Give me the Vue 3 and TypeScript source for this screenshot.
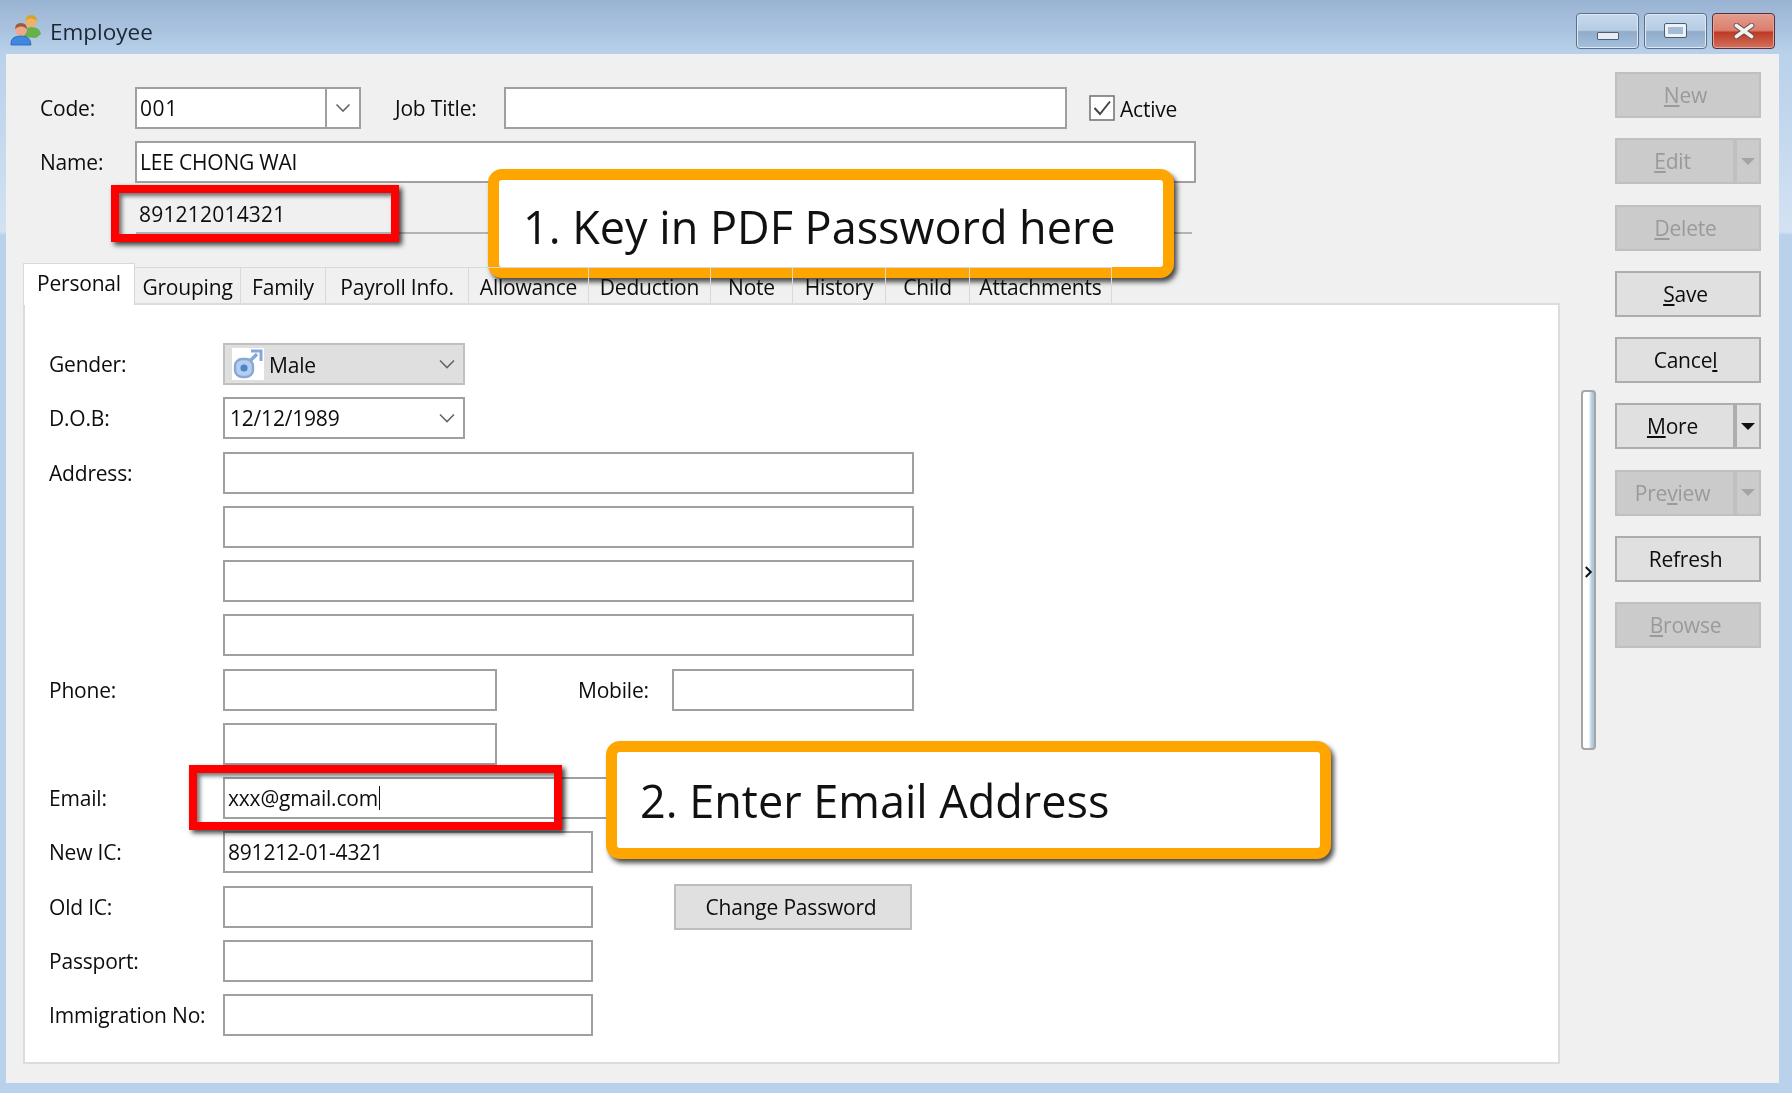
<template>
  <div class="window">
    <header class="titlebar">
      <svg class="app-icon" viewBox="0 0 32 32">
        <circle cx="21" cy="8" r="5.5" fill="#eeb16a" />
        <path d="M15 7 Q16 1 21 1 Q27 1 27 7 Q24 4 21 4.5 Q17 4 15 7Z" fill="#d9a520" />
        <path d="M14 23 Q14 13 21 13 Q30 13 31 20 L26 24Z" fill="#67b04c" />
        <circle cx="11" cy="16" r="6" fill="#eca88b" />
        <path d="M5 15 Q5 9 11 9 Q17 9 17 15 Q14 12 11 12.5 Q8 12 5 15Z" fill="#9c5a3c" />
        <path d="M1 31 Q0 22 11 22 Q21 22 21 31Z" fill="#3f88e0" stroke="#2a62b0" stroke-width="0.8" />
      </svg>
      <span class="title-text">Employee</span>
      <div class="win-controls">
        <button class="win-btn">
          <span class="glyph-min"></span>
        </button>
        <button class="win-btn">
          <span class="glyph-max"></span>
        </button>
        <button class="win-btn close">
          <svg viewBox="0 0 22 14" width="24" height="16">
            <path d="M4 2 L18 12 M18 2 L4 12" stroke="#5a4a50" stroke-width="5" stroke-linecap="round" />
            <path d="M4 2 L18 12 M18 2 L4 12" stroke="#f4f0ee" stroke-width="3.4" stroke-linecap="round" />
          </svg>
        </button>
      </div>
    </header>

    <div class="body">
      <main class="main">
        <div class="head-row">
          <label class="head-label">Code:</label>
          <div class="field code-combo">
            <span class="code-value">001</span>
            <span class="code-arrow"><svg viewBox="0 0 16 10" width="16" height="10"><path d="M1.5 1.5 L8 8 L14.5 1.5" fill="none" stroke="#666" stroke-width="1.6" /></svg></span>
          </div>
          <label class="job-label">Job Title:</label>
          <div class="field job-input"></div>
          <span class="checkbox">
            <svg viewBox="0 0 26 26" width="26" height="26"><rect x="1" y="1" width="24" height="24" fill="#fff" stroke="#777" stroke-width="1.6" /><path d="M5.5 13 L11 19 L21 6.5" fill="none" stroke="#444" stroke-width="2" /></svg>
          </span>
          <span class="active-text">Active</span>
        </div>
        <div class="head-row name-row">
          <label class="head-label">Name:</label>
          <div class="field name-input">LEE CHONG WAI</div>
        </div>
        <div class="pdf-row">891212014321</div>

        <nav class="tabs">
          <div v-for="(tab, i) in tabs" :key="tab" class="tab" :class="{ current: i === 0 }">{{ tab }}</div>
        </nav>

        <section class="panel">
          <div class="row">
            <label>Gender:</label>
            <div class="field gender">
              <span class="gender-icon">
                <svg viewBox="0 0 32 32" width="32" height="32">
                  <rect x="3" y="11" width="18" height="18" rx="7" fill="#b5cdee" stroke="#86a8d8" stroke-width="2.4" />
                  <circle cx="12" cy="20" r="3.6" fill="#4f83c8" />
                  <path d="M18 13 L25 6" fill="none" stroke="#86a8d8" stroke-width="3.4" />
                  <path d="M19 3 H29 V13" fill="none" stroke="#86a8d8" stroke-width="3" />
                </svg>
              </span>
              <span class="gender-text">Male</span>
              <svg class="chev" viewBox="0 0 16 10" width="16" height="10"><path d="M1 1.5 L8 8.5 L15 1.5" fill="none" stroke="#666" stroke-width="1.6" /></svg>
            </div>
          </div>
          <div class="row">
            <label>D.O.B:</label>
            <div class="field dob">
              <span>12/12/1989</span>
              <svg class="chev" viewBox="0 0 16 10" width="16" height="10"><path d="M1 1.5 L8 8.5 L15 1.5" fill="none" stroke="#666" stroke-width="1.6" /></svg>
            </div>
          </div>
          <div class="row">
            <label>Address:</label>
            <div class="field wide"></div>
          </div>
          <div class="row"><label></label><div class="field wide"></div></div>
          <div class="row"><label></label><div class="field wide"></div></div>
          <div class="row"><label></label><div class="field wide"></div></div>
          <div class="row">
            <label>Phone:</label>
            <div class="field short"></div>
            <label class="mobile-label">Mobile:</label>
            <div class="field mobile"></div>
          </div>
          <div class="row"><label></label><div class="field short"></div></div>
          <div class="row">
            <label>Email:</label>
            <div class="field wide">xxx@gmail.com<span class="caret"></span></div>
          </div>
          <div class="row">
            <label>New IC:</label>
            <div class="field medium">891212-01-4321</div>
          </div>
          <div class="row">
            <label>Old IC:</label>
            <div class="field medium"></div>
            <button class="change-pass">Change Password</button>
          </div>
          <div class="row">
            <label>Passport:</label>
            <div class="field medium"></div>
          </div>
          <div class="row">
            <label>Immigration No:</label>
            <div class="field medium"></div>
          </div>
        </section>
      </main>

      <div class="splitter">
        <svg class="split-arrow" viewBox="0 0 10 14" width="9" height="14"><path d="M2 1.5 L7.5 7 L2 12.5" fill="none" stroke="#111" stroke-width="2.2" /></svg>
      </div>

      <aside class="actions">
        <div v-for="b in buttons" :key="b.pre + b.key" class="action" :class="{ disabled: b.disabled }">
          <span class="action-label">{{ b.pre }}<u>{{ b.key }}</u>{{ b.post }}</span>
          <span v-if="b.split" class="action-drop"><i class="drop-arrow"></i></span>
        </div>
      </aside>
    </div>

    <!-- annotations on top of the screenshot -->
    <div class="red-box pdf-box"></div>
    <div class="red-box email-box"></div>
    <div class="callout callout-one">1. Key in PDF Password here</div>
    <div class="callout callout-two">2. Enter Email Address</div>
  </div>
</template>

<script setup lang="ts">
interface ActionButton {
  pre: string
  key: string
  post: string
  disabled?: boolean
  split?: boolean
}

const tabs: string[] = [
  'Personal',
  'Grouping',
  'Family',
  'Payroll Info.',
  'Allowance',
  'Deduction',
  'Note',
  'History',
  'Child',
  'Attachments',
]

const buttons: ActionButton[] = [
  { pre: '', key: 'N', post: 'ew', disabled: true },
  { pre: '', key: 'E', post: 'dit', disabled: true, split: true },
  { pre: '', key: 'D', post: 'elete', disabled: true },
  { pre: '', key: 'S', post: 'ave' },
  { pre: 'Cance', key: 'l', post: '' },
  { pre: '', key: 'M', post: 'ore', split: true },
  { pre: 'Pre', key: 'v', post: 'iew', disabled: true, split: true },
  { pre: 'Refresh', key: '', post: '' },
  { pre: '', key: 'B', post: 'rowse', disabled: true },
]
</script>

<style>
html,
body {
  margin: 0;
  background: #b9d1ea;
}
</style>

<style scoped>
.window {
  position: relative;
  width: 1792px;
  height: 1093px;
  overflow: hidden;
  display: flex;
  flex-direction: column;
  font-family: "Open Sans", "Noto Sans", sans-serif;
  font-size: 21px;
  letter-spacing: -0.2px;
  color: #0d0d0d;
  background: linear-gradient(to bottom, #b9d1ea 54px, #d2e2f2 232px, #b9d1ea 235px);
  filter: blur(0.5px);
}

.titlebar {
  height: 54px;
  flex: none;
  display: flex;
  align-items: center;
  padding: 0 17px 0 10px;
  box-sizing: border-box;
  background: linear-gradient(to bottom, #99b4d2 0%, #a9c3df 55%, #b9d1ea 100%);
}
.app-icon {
  width: 32px;
  height: 32px;
  margin-right: 8px;
  margin-top: 6px;
}
.title-text {
  font-size: 22.5px;
  letter-spacing: 0;
  color: #1c2733;
  margin-top: 8px;
}
.win-controls {
  margin-left: auto;
  display: flex;
  gap: 5px;
  margin-top: 8px;
}
.win-btn {
  width: 63px;
  height: 36px;
  padding: 0;
  display: flex;
  align-items: center;
  justify-content: center;
  border: 1px solid #5d7088;
  border-radius: 4px;
  box-shadow: inset 0 0 0 1px #dfe9f4;
  background: linear-gradient(to bottom, #c6d8ec 0%, #b7cde5 48%, #8facca 52%, #a6c0dc 100%);
}
.win-btn.close {
  border-color: #5a2d38;
  box-shadow: inset 0 0 0 1px #e2a79b;
  background: linear-gradient(to bottom, #e59c8d 0%, #d97f6e 48%, #bf3a25 54%, #d2705c 100%);
}
.glyph-min {
  width: 20px;
  height: 6px;
  margin-top: 10px;
  background: #e8edf3;
  border: 1px solid #4f5f73;
  border-radius: 1px;
}
.glyph-max {
  width: 15px;
  height: 7px;
  background: #a5bcd6;
  border: 3px solid #eef2f7;
  outline: 1px solid #4f5f73;
  border-radius: 1px;
  margin-top: -2px;
}

.body {
  flex: none;
  height: 1029px;
  margin: 0 13px 0 6px;
  background: #f0f0f0;
  display: flex;
}

.main {
  width: 1553px;
  flex: none;
  padding: 33px 0 0 17px;
  box-sizing: border-box;
}

.field {
  height: 42px;
  box-sizing: border-box;
  background: #fff;
  border: 2px solid #a0a0a0;
  display: flex;
  align-items: center;
  padding-left: 3px;
}

.head-row {
  display: flex;
  align-items: center;
  height: 42px;
}
.name-row {
  margin-top: 12px;
}
.head-label {
  width: 95px;
  padding-left: 17px;
}
.code-combo {
  width: 226px;
  padding: 0;
}
.code-value {
  flex: 1;
  padding-left: 3px;
  letter-spacing: 0.6px;
}
.code-arrow {
  width: 32px;
  height: 100%;
  border-left: 2px solid #a0a0a0;
  display: flex;
  align-items: center;
  justify-content: center;
}
.job-label {
  margin-left: 34px;
  width: 109px;
}
.job-input {
  width: 563px;
}
.checkbox {
  margin-left: 22px;
  height: 26px;
  margin-right: 5px;
}
.active-text {
  margin-top: 2px;
}
.name-input {
  width: 1061px;
}
.pdf-row {
  margin: 13px 0 0 113px;
  width: 1056px;
  height: 38px;
  box-sizing: border-box;
  display: flex;
  align-items: center;
  padding: 0 0 0 3px;
  border-bottom: 2px solid #b4b4b4;
  letter-spacing: 0.2px;
}

.tabs {
  margin-top: 28px;
  height: 41px;
  display: grid;
  grid-template-columns: 112px 106px 85px 143px 120px 122px 82px 93px 84px 142px;
  align-items: end;
  position: relative;
  z-index: 1;
}
.tab {
  height: 36px;
  box-sizing: border-box;
  display: flex;
  align-items: center;
  justify-content: center;
  white-space: nowrap;
  border: 1px solid #d9d9d9;
  border-left: 0;
  border-bottom: 0;
  padding-top: 2px;
}
.tab.current {
  height: 42px;
  margin-bottom: -2px;
  background: #fff;
  border-left: 1px solid #d9d9d9;
  padding-bottom: 5px;
}

.panel {
  width: 1537px;
  height: 761px;
  box-sizing: border-box;
  background: #fff;
  border: 2px solid #dcdcdc;
  padding: 38px 0 0 24px;
  display: flex;
  flex-direction: column;
  gap: 12.25px;
}
.row {
  display: flex;
  align-items: center;
  height: 42px;
  flex: none;
}
.row > label:first-child {
  width: 174px;
  flex: none;
}
.gender {
  width: 242px;
  background: #dfdfdf;
  border-color: #c0c0c0;
  padding-left: 7px;
}
.gender-icon {
  width: 32px;
  height: 32px;
  background: #fff;
  margin-right: 5px;
  display: block;
}
.gender-text {
  margin-top: 2px;
}
.dob {
  width: 242px;
  padding-left: 5px;
}
.chev {
  margin-left: auto;
  margin-right: 8px;
}
.wide {
  width: 691px;
}
.short {
  width: 274px;
}
.mobile-label {
  margin-left: 81px;
  width: 94px;
}
.mobile {
  width: 242px;
}
.medium {
  width: 370px;
}
.caret {
  width: 1.5px;
  height: 24px;
  margin-left: 1px;
  background: #111;
}
.change-pass {
  margin-left: 81px;
  width: 238px;
  height: 46px;
  flex: none;
  background: #e0e0e0;
  border: 2px solid #bdbdbd;
  font: inherit;
  letter-spacing: inherit;
  color: inherit;
  padding: 0 4px 0 0;
}

.splitter {
  position: relative;
  flex: none;
  width: 15px;
  height: 360px;
  margin: 336px 0 0 22px;
  box-sizing: border-box;
  border: 2px solid #a6a6a6;
  border-radius: 4px;
  background: linear-gradient(to right, #fff 0, #fff 50%, #b5cfe3 80%, #a8c4da 100%);
}
.split-arrow {
  position: absolute;
  left: 1px;
  top: 173px;
}

.actions {
  flex: none;
  width: 146px;
  margin: 18px 0 0 19px;
  display: flex;
  flex-direction: column;
  gap: 20.3px;
}
.action {
  height: 46px;
  box-sizing: border-box;
  display: flex;
  background: #e0e0e0;
  border: 2px solid #adadad;
  color: #0d0d0d;
}
.action-label {
  flex: 1;
  display: flex;
  align-items: center;
  justify-content: center;
  padding-right: 5px;
  white-space: pre;
}
.action-drop {
  flex: none;
  border-left: 4px solid #adadad;
  width: 22px;
  display: flex;
  align-items: center;
  justify-content: center;
}
.drop-arrow {
  width: 0;
  height: 0;
  border-left: 7px solid transparent;
  border-right: 7px solid transparent;
  border-top: 7px solid #111;
}
.action.disabled {
  background: #cbcbcb;
  border-color: #c0c0c0;
  color: #9a9a9a;
}
.action.disabled .action-drop {
  border-left-color: #c0c0c0;
}
.action.disabled .drop-arrow {
  border-top-color: #a4a4a4;
}

.red-box {
  position: absolute;
  box-sizing: border-box;
  border: 8px solid #ff0000;
  box-shadow: 3px 3px 5px rgba(0, 0, 0, 0.75), inset 3px 3px 4px rgba(0, 0, 0, 0.55);
}
.pdf-box {
  left: 111px;
  top: 185px;
  width: 288px;
  height: 57px;
}
.email-box {
  left: 189px;
  top: 765px;
  width: 373px;
  height: 65px;
}

.callout {
  position: absolute;
  box-sizing: border-box;
  display: flex;
  align-items: center;
  background: #fff;
  border: 11px solid #ffa500;
  border-radius: 14px;
  box-shadow: 3px 4px 5px rgba(0, 0, 0, 0.7);
  font-size: 45px;
  letter-spacing: 0;
  color: #111;
  white-space: nowrap;
}
.callout-one {
  left: 488px;
  top: 169px;
  width: 686px;
  height: 109px;
  padding: 6px 0 0 24px;
}
.callout-two {
  left: 606px;
  top: 741px;
  width: 725px;
  height: 118px;
  padding: 0 0 0 23px;
}
</style>
